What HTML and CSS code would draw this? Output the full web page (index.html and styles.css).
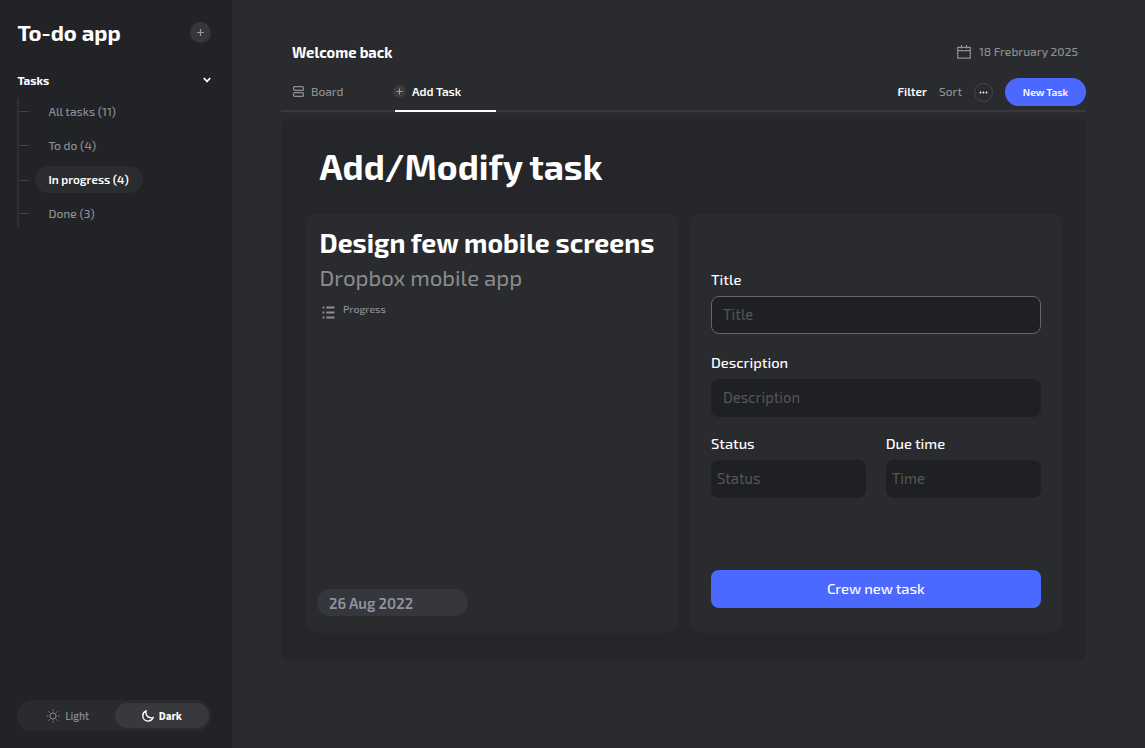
FILE: index.html
```html
<!DOCTYPE html>
<html lang="en">
<head>
<meta charset="utf-8">
<title>To-do app</title>
<link rel="stylesheet" href="styles.css">
</head>
<body>
<div class="app">
  <aside class="sidebar">
    <div class="brand">
      <h1 class="brand-name">To-do app</h1>
      <button class="round-add" aria-label="Add"><svg width="9" height="9" viewBox="0 0 9 9"><path d="M4.500 1v7M1 4.500h7"/></svg></button>
    </div>
    <div class="group-head">
      <span class="group-title">Tasks</span>
      <svg class="chevron" width="8" height="6" viewBox="0 0 8 6"><path d="M.8 1 4 4.400 7.200 1"/></svg>
    </div>
    <nav class="tree">
      <a class="node"><span class="pill">All tasks (11)</span></a>
      <a class="node"><span class="pill">To do (4)</span></a>
      <a class="node low"><span class="pill active">In progress (4)</span></a>
      <a class="node"><span class="pill">Done (3)</span></a>
    </nav>
    <div class="theme">
      <button class="mode">
        <svg width="14" height="14" viewBox="0 0 14 14"><circle cx="7" cy="7" r="3.100"/><path d="M7 .8v1.400M7 11.800v1.400M.8 7h1.400M11.800 7h1.400M2.500 2.500l1 1M10.500 10.500l1 1M11.500 2.500l-1 1M3.500 10.500l-1 1"/></svg>
        <span>Light</span>
      </button>
      <button class="mode on">
        <svg width="12" height="12" viewBox="0 0 12 12"><path d="M4 1C2 1.800.8 3.600.8 5.800c0 3 2.300 5.300 5.200 5.300 2.300 0 4.300-1.400 5.100-3.500C7.500 8.700 3 6 4 1Z"/></svg>
        <span>Dark</span>
      </button>
    </div>
  </aside>
  <main class="main">
    <header class="top">
      <h2 class="welcome">Welcome back</h2>
      <div class="date">
        <svg width="14" height="14" viewBox="0 0 14 14"><path d="M.7 2.400h12.600v10.800H.7zM.7 5.600h12.600M4.500 0v3.600M9.500 0v3.600"/></svg>
        <span>18 Frebruary 2025</span>
      </div>
    </header>
    <div class="tabs">
      <a class="tab board">
        <svg width="11" height="11" viewBox="0 0 11 11"><rect x=".6" y=".6" width="9.800" height="3.800" rx="1"/><rect x=".6" y="6.600" width="9.800" height="3.800" rx="1"/></svg>
        <span>Board</span>
      </a>
      <a class="tab add">
        <i class="mini-add"><svg width="7" height="7" viewBox="0 0 7 7"><path d="M3.500.5v6M.5 3.500h6"/></svg></i>
        <span>Add Task</span>
      </a>
      <div class="actions">
        <span class="filter">Filter</span>
        <span class="sort">Sort</span>
        <button class="more" aria-label="More"><svg width="9" height="3" viewBox="0 0 9 3"><circle cx="1.500" cy="1.500" r=".9"/><circle cx="4.500" cy="1.500" r=".9"/><circle cx="7.500" cy="1.500" r=".9"/></svg></button>
        <button class="new-task">New Task</button>
      </div>
    </div>
    <section class="panel">
      <h2 class="panel-title">Add/Modify task</h2>
      <div class="columns">
        <article class="card preview">
          <h3 class="task-title">Design few mobile screens</h3>
          <p class="task-sub">Dropbox mobile app</p>
          <div class="progress">
            <svg width="13" height="13" viewBox="0 0 13 13"><path d="M4.300 1.500h8.200M4.300 6.500h8.200M4.300 11.500h8.200M.6 1.500h1.800M.6 6.500h1.800M.6 11.500h1.800"/></svg>
            <span>Progress</span>
          </div>
          <div class="due">26 Aug 2022</div>
        </article>
        <form class="card form">
          <div class="field"><label class="lbl">Title</label><div class="input focus">Title</div></div>
          <div class="field second"><label class="lbl">Description</label><div class="input">Description</div></div>
          <div class="pair">
            <div class="field"><label class="lbl">Status</label><div class="input tight">Status</div></div>
            <div class="field"><label class="lbl">Due time</label><div class="input tight">Time</div></div>
          </div>
          <button type="button" class="submit">Crew new task</button>
        </form>
      </div>
    </section>
  </main>
</div>
</body>
</html>
```
FILE: styles.css
```css
* { box-sizing: border-box; }
body { margin: 0; background: #2a2b2f; color: #fff; font-family: "Exo 2", "Noto Sans", sans-serif; }
h1, h2, h3, p { margin: 0; }
button { border: 0; padding: 0; font: inherit; color: inherit; background: none; }
svg { display: block; flex: none; fill: none; stroke: currentColor; }
span { white-space: nowrap; }
.app { display: flex; width: 1145px; height: 748px; }

.sidebar { width: 232px; padding: 20px 21px 17px 17.400px; background: #222327; display: flex; flex-direction: column; }
.brand { display: flex; align-items: center; justify-content: space-between; height: 25px; }
.brand-name { font-size: 22.100px; line-height: 25px; font-weight: 700; }
.round-add { width: 21px; height: 21px; border-radius: 50%; background: #36373b; color: #96979a; display: grid; place-items: center; }
.round-add svg { stroke-width: 1.2; }
.group-head { display: flex; justify-content: space-between; align-items: center; height: 16px; margin-top: 27px; }
.group-title { font-size: 11.800px; line-height: 16px; font-weight: 700; }
.chevron { stroke-width: 1.700; }
.tree { margin-top: 10px; border-left: 2px solid #303135; height: 129px; }
.node { display: flex; align-items: center; height: 34px; }
.node:first-child { height: 28px; margin-bottom: 3px; margin-top: -1px; }
.node::before { content: ""; width: 10px; height: 1px; background: #404145; margin-right: 6px; }
.node.low::before { margin-top: 2px; }
.pill { height: 27px; line-height: 27px; padding: 0 14px 0 13px; border-radius: 14px; font-size: 12px; font-weight: 500; color: #8e8f92; }
.pill.active { background: #2b2c30; color: #fff; font-weight: 600; font-size: 11.800px; }
.theme { display: flex; width: 193.500px; height: 31px; margin-top: auto; padding: 3px 2px 3px 3px; border-radius: 16px; background: #2a2b2f; }
.mode { width: 94.500px; display: flex; align-items: center; justify-content: center; gap: 5px; font: 500 11px/25px "Source Sans Pro", "Source Sans 3", "Noto Sans CJK SC", sans-serif; color: #8e8f92; border-radius: 13px; }
.mode span { padding-top: 1px; }
.mode.on { background: #38393d; color: #fff; font-weight: 700; }
.mode.on svg { stroke-width: 1.400; }

.main { width: 913px; padding: 42px 59px 0 49px; }
.top { display: flex; justify-content: space-between; height: 20px; padding: 0 8px 0 11px; align-items: center; }
.welcome { font-size: 14.700px; line-height: 20px; font-weight: 700; }
.date { display: flex; align-items: center; gap: 8px; font-size: 12.050px; font-weight: 500; color: #8e8f92; line-height: 18px; padding-bottom: 1px; }
.date span { padding-bottom: 1px; }
.date svg { stroke-width: 1.200; }
.tabs { display: flex; height: 50px; border-bottom: 2px solid #38393d; padding-top: 8px; }
.tab { display: flex; align-items: center; height: 41px; font-size: 11.900px; }
.board { width: 114px; padding-left: 12px; gap: 7px; color: #8e8f92; font-weight: 500; }
.board svg { stroke-width: 1.200; margin-top: 2px; }
.add { width: 101px; height: 42px; padding-top: 2px; border-bottom: 2px solid #fff; gap: 6px; font-weight: 600; }
.mini-add { width: 13px; height: 13px; border-radius: 50%; background: #3a3b3f; color: #a0a1a4; display: grid; place-items: center; margin-left: -2px; }
.actions { margin-left: auto; display: flex; align-items: center; height: 44px; font-size: 11.900px; }
.filter, .sort { padding-bottom: 2px; }
.filter { font-weight: 600; margin-right: 12px; }
.sort { color: #8e8f92; font-weight: 500; margin-right: 12px; }
.more { width: 19px; height: 19px; border: 1px solid #46474b; border-radius: 50%; display: grid; place-items: center; margin-right: 12px; }
.more svg { fill: #fff; stroke: none; }
.new-task { width: 81px; height: 28px; border-radius: 14px; background: #4b69ff; font-size: 10.300px; font-weight: 600; }

.panel { margin-top: 7px; height: 542px; padding: 26px 24px 28px 24.500px; border-radius: 8px; background: #25262a; }
.panel-title { font-size: 35.400px; line-height: 42px; font-weight: 700; padding-left: 14px; }
.columns { display: grid; grid-template-columns: 372.500px 372px; gap: 12px; margin-top: 27px; }
.card { height: 419px; border-radius: 9px; background: #2a2b2f; }
.preview { display: flex; flex-direction: column; padding: 10px 14px 17px; }
.task-title { font-size: 26.550px; line-height: 36px; font-weight: 700; white-space: nowrap; }
.task-sub { font-size: 22.250px; line-height: 34px; color: #8b8c8f; }
.progress { display: flex; gap: 8px; padding-left: 2.500px; margin-top: 9px; font-size: 10.500px; line-height: 12px; font-weight: 500; color: #8e8f92; }
.progress svg { margin-top: 3px; stroke-width: 1.800; }
.due { margin: auto 0 0 -2.500px; width: 151px; height: 27px; padding-left: 12px; border-radius: 14px; background: #36373c; color: #9092a3; font-size: 14.750px; line-height: 28px; font-weight: 600; }
.form { display: flex; flex-direction: column; padding: 56px 21.500px 25px 21px; }
.lbl { display: block; font-size: 14.700px; line-height: 19px; font-weight: 500; margin-bottom: 7px; }
.input { height: 38px; border-radius: 8px; background: #1f2024; padding-left: 12px; font-size: 14.800px; line-height: 37px; color: #55565a; }
.input.focus { border: 1px solid #66676a; line-height: 35px; padding-left: 11px; }
.input.tight { padding-left: 6px; }
.second { margin-top: 19px; }
.pair { display: grid; grid-template-columns: 1fr 1fr; gap: 20px; margin-top: 17px; }
.submit { margin-top: auto; height: 38px; border-radius: 8px; background: #4b69ff; font-size: 14.700px; line-height: 36px; padding-bottom: 2px; font-weight: 500; }
```
